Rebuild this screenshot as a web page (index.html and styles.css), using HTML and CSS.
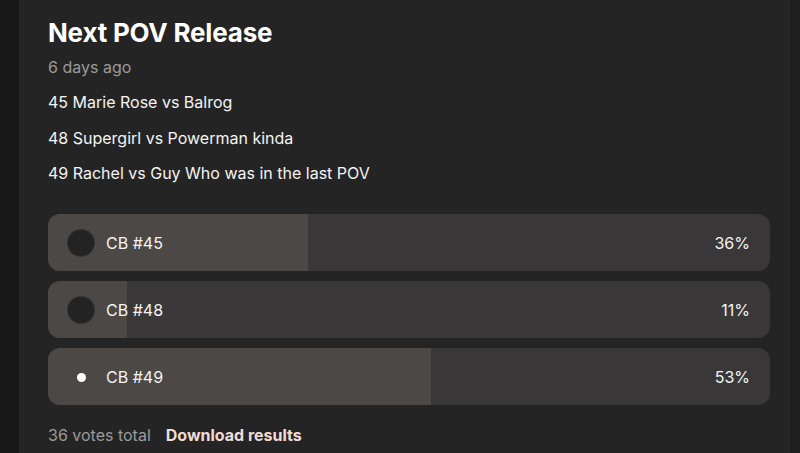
FILE: index.html
```html
<!DOCTYPE html>
<html>
<head>
<meta charset="utf-8">
<link rel="stylesheet" href="styles.css">
</head>
<body>
<div class="page">
  <div class="panel">
    <h1 class="title">Next POV Release</h1>
    <div class="meta">6 days ago</div>
    <div class="desc">
      <p>45 Marie Rose vs Balrog</p>
      <p>48 Supergirl vs Powerman kinda</p>
      <p>49 Rachel vs Guy Who was in the last POV</p>
    </div>
    <div class="options">
      <div class="option">
        <div class="fill" style="width:36%"></div>
        <span class="radio"></span>
        <span class="label">CB #45</span>
        <span class="pct">36%</span>
      </div>
      <div class="option">
        <div class="fill" style="width:11%"></div>
        <span class="radio"></span>
        <span class="label">CB #48</span>
        <span class="pct">11%</span>
      </div>
      <div class="option">
        <div class="fill" style="width:53%"></div>
        <span class="radio selected"></span>
        <span class="label">CB #49</span>
        <span class="pct">53%</span>
      </div>
    </div>
    <div class="footer">
      <span class="votes">36 votes total</span>
      <a class="download">Download results</a>
    </div>
  </div>
</div>
</body>
</html>
```

FILE: styles.css
```css
html, body {
  margin: 0;
  padding: 0;
  height: 100%;
  background: #1e1e1e;
  font-family: Inter, "Noto Sans", sans-serif;
  color: #f2f2f2;
  overflow: hidden;
}
.page {
  display: flex;
  height: 100%;
  background: linear-gradient(to right, #181818 0, #181818 19px, #1e1e1e 19px);
}
.panel {
  margin-left: 19px;
  width: 771px;
  box-sizing: border-box;
  padding: 17px 20px 0 29px;
  background: #242424;
}
.title {
  margin: 0;
  font-size: 26px;
  line-height: 32px;
  font-weight: 700;
  color: #ffffff;
  letter-spacing: -0.2px;
}
.meta {
  margin-top: 8px;
  font-size: 16px;
  line-height: 20px;
  color: #9b9b9b;
}
.desc {
  margin-top: 15px;
}
.desc p {
  margin: 0 0 15.5px 0;
  font-size: 16px;
  line-height: 20px;
  color: #f4f4f4;
}
.options {
  margin-top: 31px;
  display: flex;
  flex-direction: column;
  gap: 10px;
}
.option {
  position: relative;
  height: 57px;
  border-radius: 12px;
  background: #3a3738;
  overflow: hidden;
  display: flex;
  align-items: center;
  padding: 0 20px 0 20px;
}
.fill {
  position: absolute;
  left: 0;
  top: 0;
  bottom: 0;
  background: #4b4846;
}
.radio {
  position: relative;
  width: 26px;
  height: 26px;
  border-radius: 50%;
  background: #232323;
  box-shadow: 0 0 0 1px #333;
  flex: none;
}
.radio.selected {
  background: transparent;
  box-shadow: none;
}
.radio.selected::after {
  content: "";
  position: absolute;
  left: 9px;
  top: 9px;
  width: 9px;
  height: 9px;
  border-radius: 50%;
  background: #ffffff;
}
.label {
  position: relative;
  margin-left: 12px;
  font-size: 16px;
  color: #f4f4f4;
  flex: 1;
}
.pct {
  position: relative;
  font-size: 16px;
  color: #f4f4f4;
}
.footer {
  margin-top: 20px;
  font-size: 16px;
  line-height: 20px;
  display: flex;
  gap: 15px;
}
.votes {
  color: #9b9b9b;
}
.download {
  color: #efdcd5;
  font-weight: 700;
}
```
